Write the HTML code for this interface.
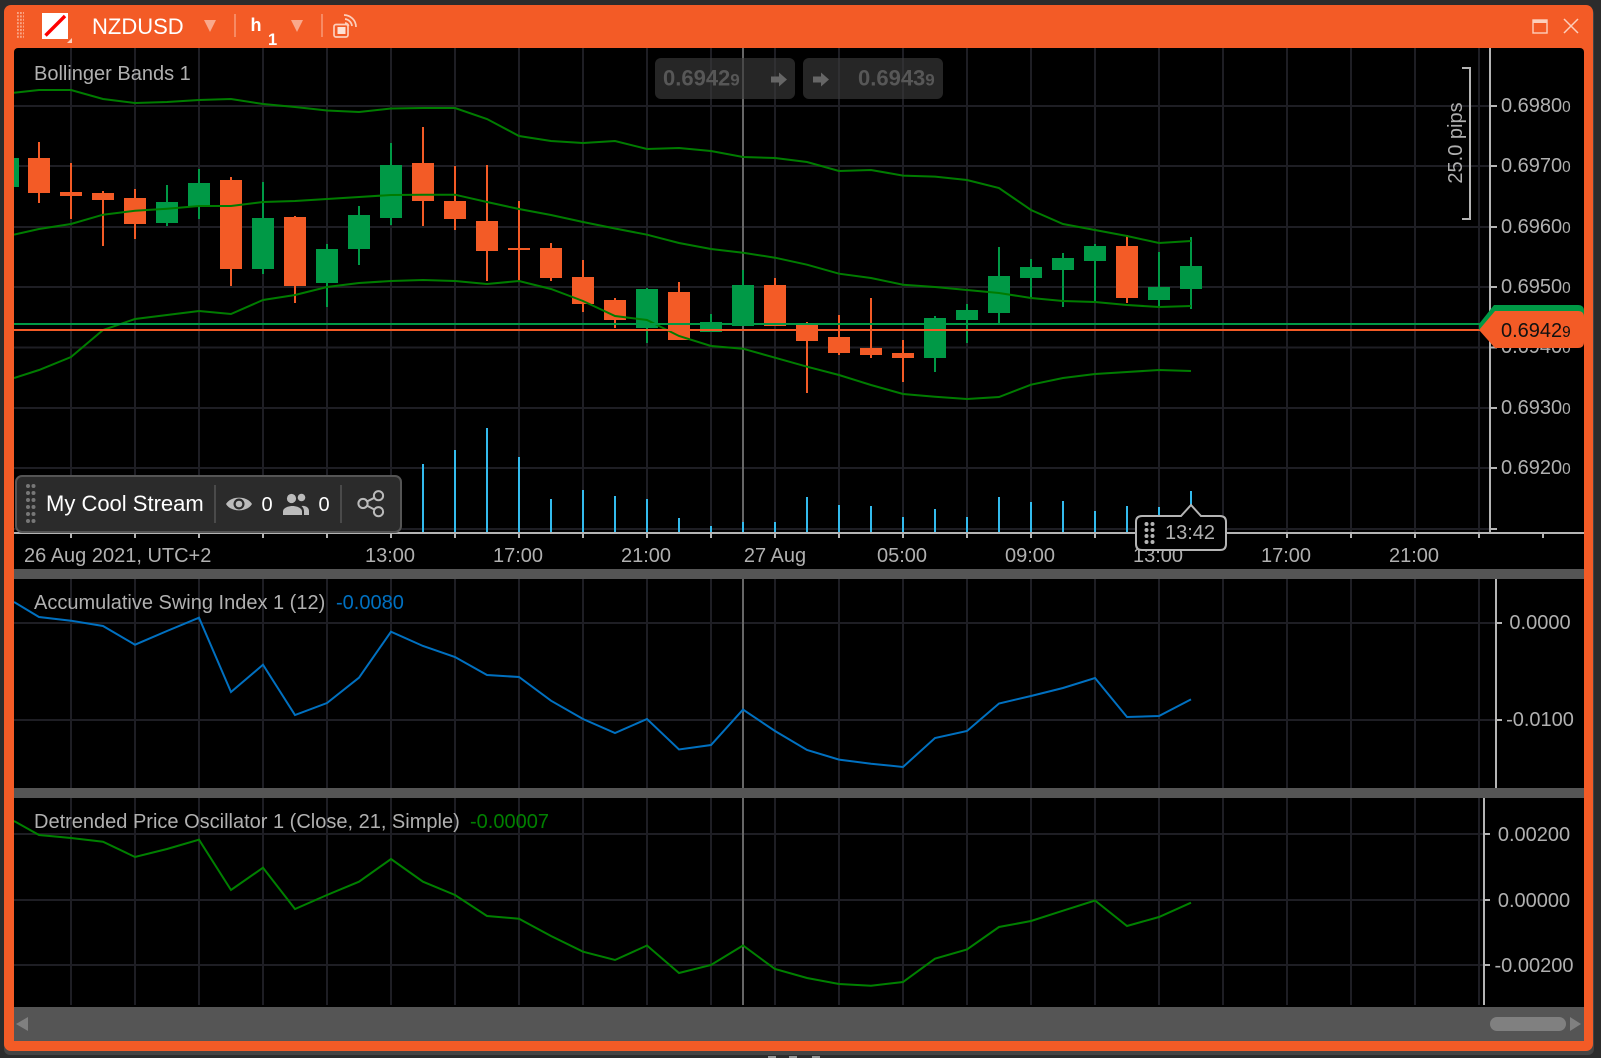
<!DOCTYPE html>
<html><head><meta charset="utf-8"><title>NZDUSD</title>
<style>
html,body{margin:0;padding:0;background:#2c2c2c;width:1601px;height:1058px;overflow:hidden}
svg{display:block}
text{font-family:"Liberation Sans",sans-serif;font-size:20px;fill:#b0b0b0}
tspan.s{font-size:15.4px}
</style></head><body>
<svg width="1601" height="1058" viewBox="0 0 1601 1058" xmlns="http://www.w3.org/2000/svg">
<defs>
<pattern id="vg" x="70" y="0" width="64" height="20" patternUnits="userSpaceOnUse"><rect width="2" height="20" fill="#1e1e24"/></pattern>
<pattern id="tk" x="70" y="0" width="64" height="20" patternUnits="userSpaceOnUse"><rect width="2" height="20" fill="#b4b4b4"/></pattern>
<pattern id="hd" x="17" y="12" width="3" height="3.4" patternUnits="userSpaceOnUse"><rect width="1.8" height="2" fill="#f9a585"/></pattern>
<clipPath id="cl"><rect x="14" y="48" width="1570" height="993"/></clipPath>
</defs>

<rect x="4" y="8" width="1590" height="1047" rx="6" fill="#444"/>
<rect x="4" y="5" width="1589" height="1046" rx="7" fill="#f35b26"/>
<rect x="14" y="48" width="1570" height="993" rx="4" fill="#000"/>

<!-- header -->
<rect x="17" y="12" width="7" height="27" fill="url(#hd)"/>
<rect x="42" y="13" width="26" height="26" fill="#fff"/>
<path d="M45.500 35.500L65 16" stroke="#f00" stroke-width="3.400"/>
<polygon points="67,43 72,43 72,38" fill="#f9d0bf"/>
<text x="92" y="34" style="font-size:22px;fill:#fff">NZDUSD</text>
<polygon points="204,20 216,20 210,32" fill="#f9a98c"/>
<rect x="234" y="14" width="2" height="23" fill="#f78a63"/>
<text x="250.500" y="31" style="font-size:18px;font-weight:bold;fill:#fff">h</text>
<text x="268" y="45" style="font-size:16.500px;font-weight:bold;fill:#fff">1</text>
<polygon points="291,20 303,20 297,32" fill="#f9a98c"/>
<rect x="321" y="14" width="2" height="23" fill="#f78a63"/>
<g fill="none" stroke="#fccfbc" stroke-width="1.700">
<rect x="334" y="24.500" width="14" height="12.500" rx="2"/>
<path d="M344 15A12 12 0 0 1 356 27M345 19A8 8 0 0 1 352 26M345 23A4 4 0 0 1 348.500 26"/>
<rect x="1533" y="20" width="14" height="13" stroke-width="1.400"/>
<path d="M1564 19L1578 33M1578 19L1564 33" stroke-width="1.500"/>
</g>
<rect x="337.500" y="27" width="8" height="7" fill="#fde2d6"/>
<rect x="1533" y="20" width="14" height="3" fill="#fccfbc"/>

<g clip-path="url(#cl)">
<!-- grids -->
<rect x="14" y="48" width="1476" height="485" fill="url(#vg)"/>
<rect x="14" y="579" width="1482" height="209" fill="url(#vg)"/>
<rect x="14" y="798" width="1470" height="207" fill="url(#vg)"/>
<path d="M14 106H1490M14 166H1490M14 227H1490M14 287H1490M14 347.500H1490M14 408H1490M14 468H1490M14 529H1490M14 623H1496M14 720H1496M14 834H1484M14 900H1484M14 965H1484" stroke="#1e1e24" stroke-width="2" fill="none"/>
<!-- crosshair -->
<path d="M743 48V533M743 579V788M743 798V1005" stroke="#666" stroke-width="2" fill="none"/>

<!-- volume -->
<path stroke="#33bbee" stroke-width="2" fill="none" d="M423 464V532M455 450V532M487 428V532M519 457V532M551 499V532M583 490V532M615 496V532M647 499V532M679 518V532M711 526V532M743 522V532M775 522V532M807 497V532M839 505V532M871 506V532M903 517V532M935 509V532M967 517V532M999 497V532M1031 502V532M1063 501V532M1095 511V532M1127 506V532M1159 507V532M1191 491V532"/>

<!-- candles: wicks -->
<path stroke="#f35b26" stroke-width="2" fill="none" d="M39 142V203M71 163V219M103 191V246M135 189V239M231 177V286M295 216V303M423 127V226M455 166V230M487 165V281M519 201V281M551 243V281M583 260V312M615 298V328M679 282V340M775 278V326M807 322V393M839 315V355M871 298V358M903 340V382M1127 235V303"/>
<path stroke="#009946" stroke-width="2" fill="none" d="M167 185V226M199 169V219M263 182V274M327 244V307M359 206V265M391 143V225M647 288V343M711 314V332M743 270V326M935 316V372M967 304V343M999 247V323M1031 259V298M1063 253V307M1095 244V302M1159 252V307M1191 237V309"/>
<!-- candles: bodies -->
<path fill="#f35b26" d="M28 158h22v35h-22zM60 192h22v4h-22zM92 193h22v7h-22zM124 198h22v26h-22zM220 180h22v89h-22zM284 217h22v69h-22zM412 163h22v38h-22zM444 201h22v18h-22zM476 221h22v30h-22zM508 248h22v2h-22zM540 248h22v30h-22zM572 277h22v27h-22zM604 300h22v20h-22zM668 292h22v48h-22zM764 285h22v41h-22zM796 325h22v16h-22zM828 337h22v16h-22zM860 348h22v7h-22zM892 353h22v5h-22zM1116 246h22v52h-22z"/>
<path fill="#009946" d="M14 158h5v29h-5zM156 202h22v21h-22zM188 183h22v23h-22zM252 218h22v51h-22zM316 249h22v34h-22zM348 215h22v34h-22zM380 165h22v53h-22zM636 289h22v39h-22zM700 322h22v10h-22zM732 285h22v41h-22zM924 318h22v40h-22zM956 310h22v10h-22zM988 276h22v37h-22zM1020 267h22v11h-22zM1052 258h22v12h-22zM1084 246h22v15h-22zM1148 287h22v13h-22zM1180 266h22v23h-22z"/>

<!-- bollinger -->
<g fill="none" stroke="#007c00" stroke-width="2">
<polyline points="14,92.700 39,90 71,90 103,99 135,103 167,102 199,100 231,99 263,104 295,107 327,110.500 359,112 391,108.500 423,108 455,108 487,119 519,136 551,141 583,143 615,141 647,149 679,148 711,151 743,157 775,158 807,162 839,171 871,170 903,175.600 935,176.600 967,180 999,188 1031,210 1063,224 1095,230 1127,236 1159,243 1191,241"/>
<polyline points="14,234.700 39,229 71,224 103,214.700 135,210.700 167,208.700 199,206 231,206 263,202 295,201 327,199 359,197 391,195 423,194.700 455,194.700 487,202 519,209 551,215 583,222 615,228.500 647,234.700 679,243 711,249 743,252.700 775,257.700 807,264.700 839,273.700 871,278 903,284.700 935,287 967,290 999,293 1031,298 1063,301 1095,302 1127,305 1159,307 1191,306"/>
<polyline points="14,378 39,370 71,357 103,330 135,319 167,315 199,311 231,314 263,300 295,295 327,287 359,283 391,281 423,280 455,281 487,284 519,281 551,289 583,301 615,316 647,320 679,336 711,346 743,348.700 775,357.700 807,366.700 839,375 871,385 903,394 935,396.700 967,399 999,397 1031,384.700 1063,378 1095,374 1127,372 1159,370 1191,371"/>
</g>
<!-- pane 2 / 3 lines -->
<polyline fill="none" stroke="#0070c0" stroke-width="2" points="14,602 39,617 71,620.700 103,626 135,644.700 167,631 199,617.700 231,692 263,664.700 295,715 327,703 359,677.700 391,631.700 423,646 455,657 487,675 519,677 551,700.700 583,719 615,733 647,719 679,749.500 711,745 743,709.600 775,731 807,750 839,759.600 871,763.700 903,767 935,738 967,731 999,703.500 1031,696 1063,688 1095,678 1127,717 1159,716 1191,699.400"/>
<polyline fill="none" stroke="#008000" stroke-width="2" points="14,821 39,835 71,838 103,841.700 135,857 167,849 199,839.700 231,890 263,867.700 295,909 327,895 359,881.700 391,859 423,881.700 455,895 487,916 519,918.700 551,936 583,951.700 615,960 647,945.500 679,973 711,965 743,945.500 775,969 807,978 839,984 871,985.800 903,982 935,958.700 967,949.500 999,927 1031,921 1063,910.700 1095,900.500 1127,926 1159,917 1191,902.700"/>

<!-- separators & scrollbar -->
<rect x="14" y="569" width="1570" height="10" fill="#555"/>
<rect x="14" y="788" width="1570" height="10" fill="#555"/>
<rect x="14" y="1007" width="1570" height="34" fill="#555"/>
</g>
<polygon points="28,1017 28,1031 16,1024" fill="#808080"/>
<rect x="1490" y="1017" width="76" height="14" rx="7" fill="#808080"/>
<polygon points="1570,1017 1570,1031 1581,1024" fill="#808080"/>

<!-- axes -->
<path d="M1490 48V533M1496 579V788M1484 798V1005M14 533H1584" stroke="#b4b4b4" stroke-width="2" fill="none"/>
<rect x="14" y="534" width="1560" height="4" fill="url(#tk)"/>
<path stroke="#b4b4b4" stroke-width="2" d="M1490 106h7M1490 166h7M1490 227h7M1490 287h7M1490 347.500h7M1490 408h7M1490 468h7M1490 529h7M1496 623h6M1496 720h6M1484 834h6M1484 900h6M1484 965h6"/>
<text x="1501" y="112">0.6980<tspan class="s">0</tspan></text>
<text x="1501" y="172">0.6970<tspan class="s">0</tspan></text>
<text x="1501" y="233">0.6960<tspan class="s">0</tspan></text>
<text x="1501" y="293">0.6950<tspan class="s">0</tspan></text>
<text x="1501" y="353">0.6940<tspan class="s">0</tspan></text>
<text x="1501" y="414">0.6930<tspan class="s">0</tspan></text>
<text x="1501" y="474">0.6920<tspan class="s">0</tspan></text>
<text x="1540" y="629" text-anchor="middle">0.0000</text>
<text x="1540" y="726" text-anchor="middle">-0.0100</text>
<text x="1534" y="841" text-anchor="middle">0.00200</text>
<text x="1534" y="907" text-anchor="middle">0.00000</text>
<text x="1534" y="972" text-anchor="middle">-0.00200</text>

<!-- time labels -->
<text x="24" y="562">26 Aug 2021, UTC+2</text>
<g text-anchor="middle">
<text x="390" y="562">13:00</text><text x="518" y="562">17:00</text><text x="646" y="562">21:00</text><text x="775" y="562">27 Aug</text><text x="902" y="562">05:00</text><text x="1030" y="562">09:00</text><text x="1158" y="562">13:00</text><text x="1286" y="562">17:00</text><text x="1414" y="562">21:00</text>
</g>

<!-- legends -->
<text x="34" y="80">Bollinger Bands 1</text>
<text x="34" y="609">Accumulative Swing Index 1 (12)</text>
<text x="336" y="609" style="fill:#0070c0">-0.0080</text>
<text x="34" y="828">Detrended Price Oscillator 1 (Close, 21, Simple)</text>
<text x="470" y="828" style="fill:#008000">-0.00007</text>

<!-- price lines + tags -->
<rect x="14" y="323" width="1466" height="2" fill="#009946"/>
<rect x="14" y="329" width="1466" height="2" fill="#f35b26"/>
<path d="M1479 324L1494 305H1578Q1584 305 1584 311V330H1479Z" fill="#009946"/>
<path d="M1479 330L1495 311H1578Q1584 311 1584 317V342Q1584 348 1578 348H1495Z" fill="#f35b26"/>
<text x="1501" y="337" style="fill:#111">0.6942<tspan class="s">9</tspan></text>

<!-- top buttons -->
<rect x="655" y="58" width="140" height="41" rx="6" fill="#3a3a3a" fill-opacity=".65"/>
<rect x="803" y="58" width="140" height="41" rx="6" fill="#3a3a3a" fill-opacity=".65"/>
<text x="663" y="85.500" style="font-size:22px;font-weight:bold;fill:#575757">0.6942<tspan style="font-size:17px">9</tspan></text>
<text x="858" y="85.500" style="font-size:22px;font-weight:bold;fill:#575757">0.6943<tspan style="font-size:17px">9</tspan></text>
<path d="M771 76.500h8v-4l8 7-8 7v-4h-8z" fill="#666"/>
<path d="M813 76.500h8v-4l8 7-8 7v-4h-8z" fill="#666"/>

<!-- 25 pips -->
<path d="M1462 68H1470V219H1462" fill="none" stroke="#b4b4b4" stroke-width="2"/>
<text transform="translate(1462 143) rotate(-90)" text-anchor="middle">25.0 pips</text>

<!-- stream panel -->
<rect x="16" y="476" width="385" height="56" rx="6" fill="#2b2b2b" stroke="#555" stroke-width="2"/>
<g fill="#777">
<circle cx="28" cy="486" r="2"/><circle cx="33.500" cy="486" r="2"/>
<circle cx="28" cy="493" r="2"/><circle cx="33.500" cy="493" r="2"/>
<circle cx="28" cy="500" r="2"/><circle cx="33.500" cy="500" r="2"/>
<circle cx="28" cy="507" r="2"/><circle cx="33.500" cy="507" r="2"/>
<circle cx="28" cy="514" r="2"/><circle cx="33.500" cy="514" r="2"/>
<circle cx="28" cy="521" r="2"/><circle cx="33.500" cy="521" r="2"/>
</g>
<text x="46" y="511" style="font-size:22px;fill:#fff">My Cool Stream</text>
<rect x="214" y="485" width="2" height="38" fill="#4a4a4a"/>
<rect x="340" y="485" width="2" height="38" fill="#4a4a4a"/>
<path d="M226 504C231 495.500 247 495.500 252 504C247 512.500 231 512.500 226 504Z" fill="#bbb"/>
<circle cx="239" cy="504" r="5.500" fill="#2b2b2b"/><circle cx="239" cy="504" r="3.300" fill="#bbb"/>
<text x="261.500" y="511" style="font-size:20px;fill:#fff">0</text>
<circle cx="291.500" cy="498.500" r="4.600" fill="#bbb"/><circle cx="301.500" cy="497.500" r="3.800" fill="#bbb"/>
<path d="M283 515v-3.500c0-3.500 5-5.500 9.500-5.500s9.500 2 9.500 5.500v3.500zM304 515v-3.500c0-2.500-1-4-2.500-5.500 4-.5 7.500 1.500 7.500 5v4z" fill="#bbb"/>
<text x="318.500" y="511" style="font-size:20px;fill:#fff">0</text>
<g fill="none" stroke="#bbb" stroke-width="2">
<circle cx="378.500" cy="495.700" r="4.600"/><circle cx="363" cy="503.500" r="4.600"/><circle cx="378.500" cy="511.700" r="4.600"/>
<path d="M367.200 501.400L374.300 497.800M367.200 505.700L374.300 509.500"/>
</g>

<!-- time tooltip -->
<path d="M1142 516H1181L1191 505L1201 516H1220Q1226 516 1226 522V544Q1226 550 1220 550H1142Q1136 550 1136 544V522Q1136 516 1142 516Z" fill="#000" stroke="#b4b4b4" stroke-width="2"/>
<g fill="#b4b4b4">
<circle cx="1146.500" cy="524" r="2"/><circle cx="1152.500" cy="524" r="2"/>
<circle cx="1146.500" cy="530" r="2"/><circle cx="1152.500" cy="530" r="2"/>
<circle cx="1146.500" cy="536" r="2"/><circle cx="1152.500" cy="536" r="2"/>
<circle cx="1146.500" cy="542" r="2"/><circle cx="1152.500" cy="542" r="2"/>
</g>
<text x="1165" y="539">13:42</text>

<!-- bottom handle -->
<rect x="768" y="1056" width="8" height="2" fill="#999"/>
<rect x="789" y="1056" width="8" height="2" fill="#999"/>
<rect x="812" y="1056" width="8" height="2" fill="#999"/>
</svg>
</body></html>
